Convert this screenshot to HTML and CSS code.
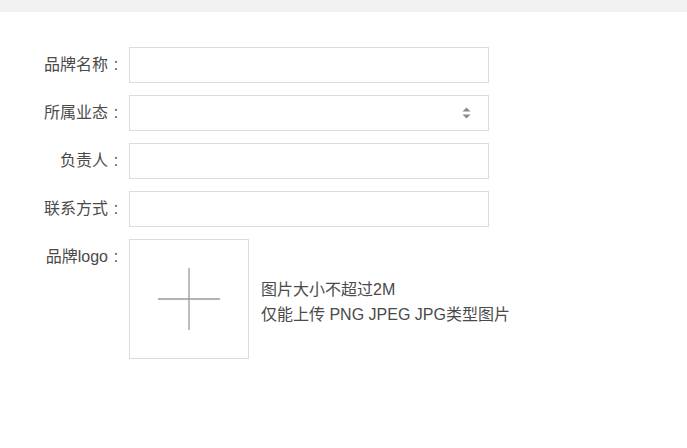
FILE: index.html
```html
<!DOCTYPE html>
<html lang="zh">
<head>
<meta charset="utf-8">
<link rel="stylesheet" href="styles.css">
</head>
<body>
<div class="topbar"></div>
<form class="form">
  <div class="row">
    <label class="label">品牌名称<span class="colon">:</span></label>
    <input class="input" type="text">
  </div>
  <div class="row">
    <label class="label">所属业态<span class="colon">:</span></label>
    <div class="select">
      <span class="arrows">
        <svg width="9" height="12" viewBox="0 0 9 12"><path d="M4.5 0.5 L8.5 4.5 L0.5 4.5 Z M4.5 11.5 L8.5 7.5 L0.5 7.5 Z" fill="#8a8a8a"/></svg>
      </span>
    </div>
  </div>
  <div class="row">
    <label class="label">负责人<span class="colon">:</span></label>
    <input class="input" type="text">
  </div>
  <div class="row">
    <label class="label">联系方式<span class="colon">:</span></label>
    <input class="input" type="text">
  </div>
  <div class="row row-top">
    <label class="label">品牌logo<span class="colon">:</span></label>
    <div class="upload">
      <div class="upload-box">
        <svg width="62" height="62" viewBox="0 0 62 62"><path d="M31 0 V62 M0 31 H62" stroke="#9a9a9a" stroke-width="1.3"/></svg>
      </div>
      <div class="tips">
        <p>图片大小不超过2M</p>
        <p>仅能上传 PNG JPEG JPG类型图片</p>
      </div>
    </div>
  </div>
</form>
</body>
</html>
```
FILE: styles.css
```css
html, body {
  margin: 0;
  background: #fff;
  font-family: "Liberation Sans", "Noto Sans CJK SC", sans-serif;
  color: #4a4a4a;
}
.topbar {
  height: 12px;
  background: #f2f2f2;
}
.form {
  padding-top: 35px;
  display: flex;
  flex-direction: column;
  gap: 12px;
}
.row {
  display: flex;
  align-items: center;
  gap: 5px;
}
.row-top {
  align-items: flex-start;
}
.label {
  width: 124px;
  text-align: right;
  font-size: 16px;
  line-height: 36px;
  color: #4a4a4a;
  flex-shrink: 0;
  white-space: nowrap;
}
.colon {
  display: inline-block;
  width: 16px;
  text-align: center;
}
.input, .select {
  box-sizing: border-box;
  width: 360px;
  height: 36px;
  border: 1px solid #dcdcdc;
  background: #fff;
  margin: 0;
  padding: 0 10px;
  outline: none;
}
.select {
  display: flex;
  align-items: center;
  justify-content: flex-end;
  padding-right: 17px;
}
.arrows {
  display: flex;
}
.upload {
  display: flex;
  align-items: center;
  gap: 12px;
}
.upload-box {
  box-sizing: border-box;
  width: 120px;
  height: 120px;
  border: 1px solid #dcdcdc;
  display: flex;
  align-items: center;
  justify-content: center;
}
.tips {
  padding-top: 5px;
}
.tips p {
  margin: 0;
  font-size: 16px;
  line-height: 25px;
  color: #4a4a4a;
}
```
